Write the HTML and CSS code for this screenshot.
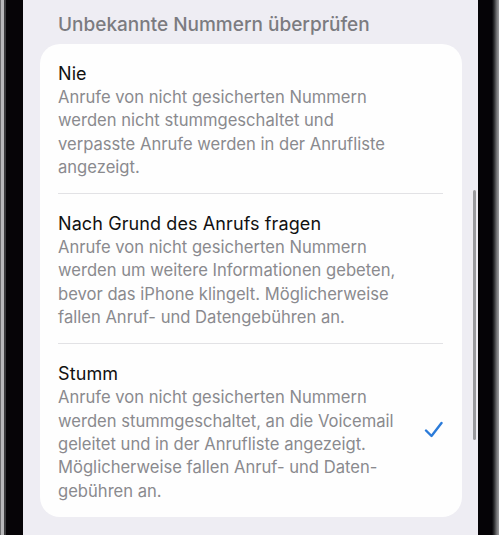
FILE: index.html
```html
<!DOCTYPE html>
<html lang="de">
<head>
<meta charset="utf-8">
<title>Unbekannte Nummern überprüfen</title>
<link rel="stylesheet" href="styles.css">
</head>
<body>
<div class="device">
  <div class="bezel bezel-left"></div>
  <main class="screen">
    <h2 class="section-title">Unbekannte Nummern überprüfen</h2>
    <ul class="card">
      <li class="option">
        <div class="option-text">
          <div class="option-title">Nie</div>
          <div class="option-desc">Anrufe von nicht gesicherten Nummern<br>werden nicht stummgeschaltet und<br>verpasste Anrufe werden in der Anrufliste<br>angezeigt.</div>
        </div>
      </li>
      <li class="option">
        <div class="option-text">
          <div class="option-title">Nach Grund des Anrufs fragen</div>
          <div class="option-desc">Anrufe von nicht gesicherten Nummern<br>werden um weitere Informationen gebeten,<br>bevor das iPhone klingelt. Möglicherweise<br>fallen Anruf- und Datengebühren an.</div>
        </div>
      </li>
      <li class="option">
        <div class="option-text">
          <div class="option-title">Stumm</div>
          <div class="option-desc">Anrufe von nicht gesicherten Nummern<br>werden stummgeschaltet, an die Voicemail<br>geleitet und in der Anrufliste angezeigt.<br>Möglicherweise fallen Anruf- und Daten-<br>gebühren an.</div>
        </div>
        <svg class="check" width="19" height="17" viewBox="0 0 19 17" aria-hidden="true">
          <path d="M2 9.5 L7.5 15 L17.5 2" fill="none" stroke="#2b7bd9" stroke-width="2.4" stroke-linecap="round" stroke-linejoin="round"/>
        </svg>
      </li>
    </ul>
    <div class="scroll-indicator"></div>
  </main>
  <div class="bezel bezel-right"></div>
</div>
</body>
</html>
```

FILE: styles.css
```css
html, body {
  margin: 0;
  padding: 0;
  height: 535px;
  overflow: hidden;
  background: #000;
}

.device {
  display: flex;
  height: 535px;
  font-family: Inter, "Noto Sans", "Liberation Sans", sans-serif;
}

.bezel-left {
  width: 23px;
  flex: none;
  background: linear-gradient(to right, #6e6e70 0, #6e6e70 1px, #b8b8ba 1px, #b8b8ba 4px, #3a3a3c 4px, #3a3a3c 6px, #060407 6px);
}

.bezel-right {
  width: 21px;
  flex: none;
  background: linear-gradient(to right, #050306 0, #050306 14px, #2a2a2c 16px, #7a7a7c 19px, #9a9a9c 21px);
}

.screen {
  flex: 1;
  position: relative;
  background: #eeedf3;
  padding: 13px 16px 0 17px;
}

.section-title {
  margin: 0 0 8px 18px;
  font-size: 19px;
  line-height: 23px;
  font-weight: 500;
  color: #7b7b80;
}

.card {
  list-style: none;
  margin: 0;
  padding: 0;
  background: #fefefe;
  border-radius: 20px;
}

.option {
  display: flex;
  align-items: center;
  margin: 0 19px 0 18px;
  padding: 17px 0 14px;
  border-bottom: 1px solid #e2e2e5;
}

.option:last-child {
  border-bottom: none;
}

.option-text {
  flex: 1;
}

.option-title {
  font-size: 18px;
  line-height: 25px;
  color: #111;
  letter-spacing: 0.1px;
}

.option-desc {
  font-size: 16.6px;
  line-height: 23.3px;
  color: #8a8a8e;
}

.check {
  flex: none;
  margin-top: -6px;
}

.scroll-indicator {
  position: absolute;
  left: 450px;
  top: 190px;
  width: 3px;
  height: 250px;
  border-radius: 2px;
  background: #9a9a9e;
}
```
